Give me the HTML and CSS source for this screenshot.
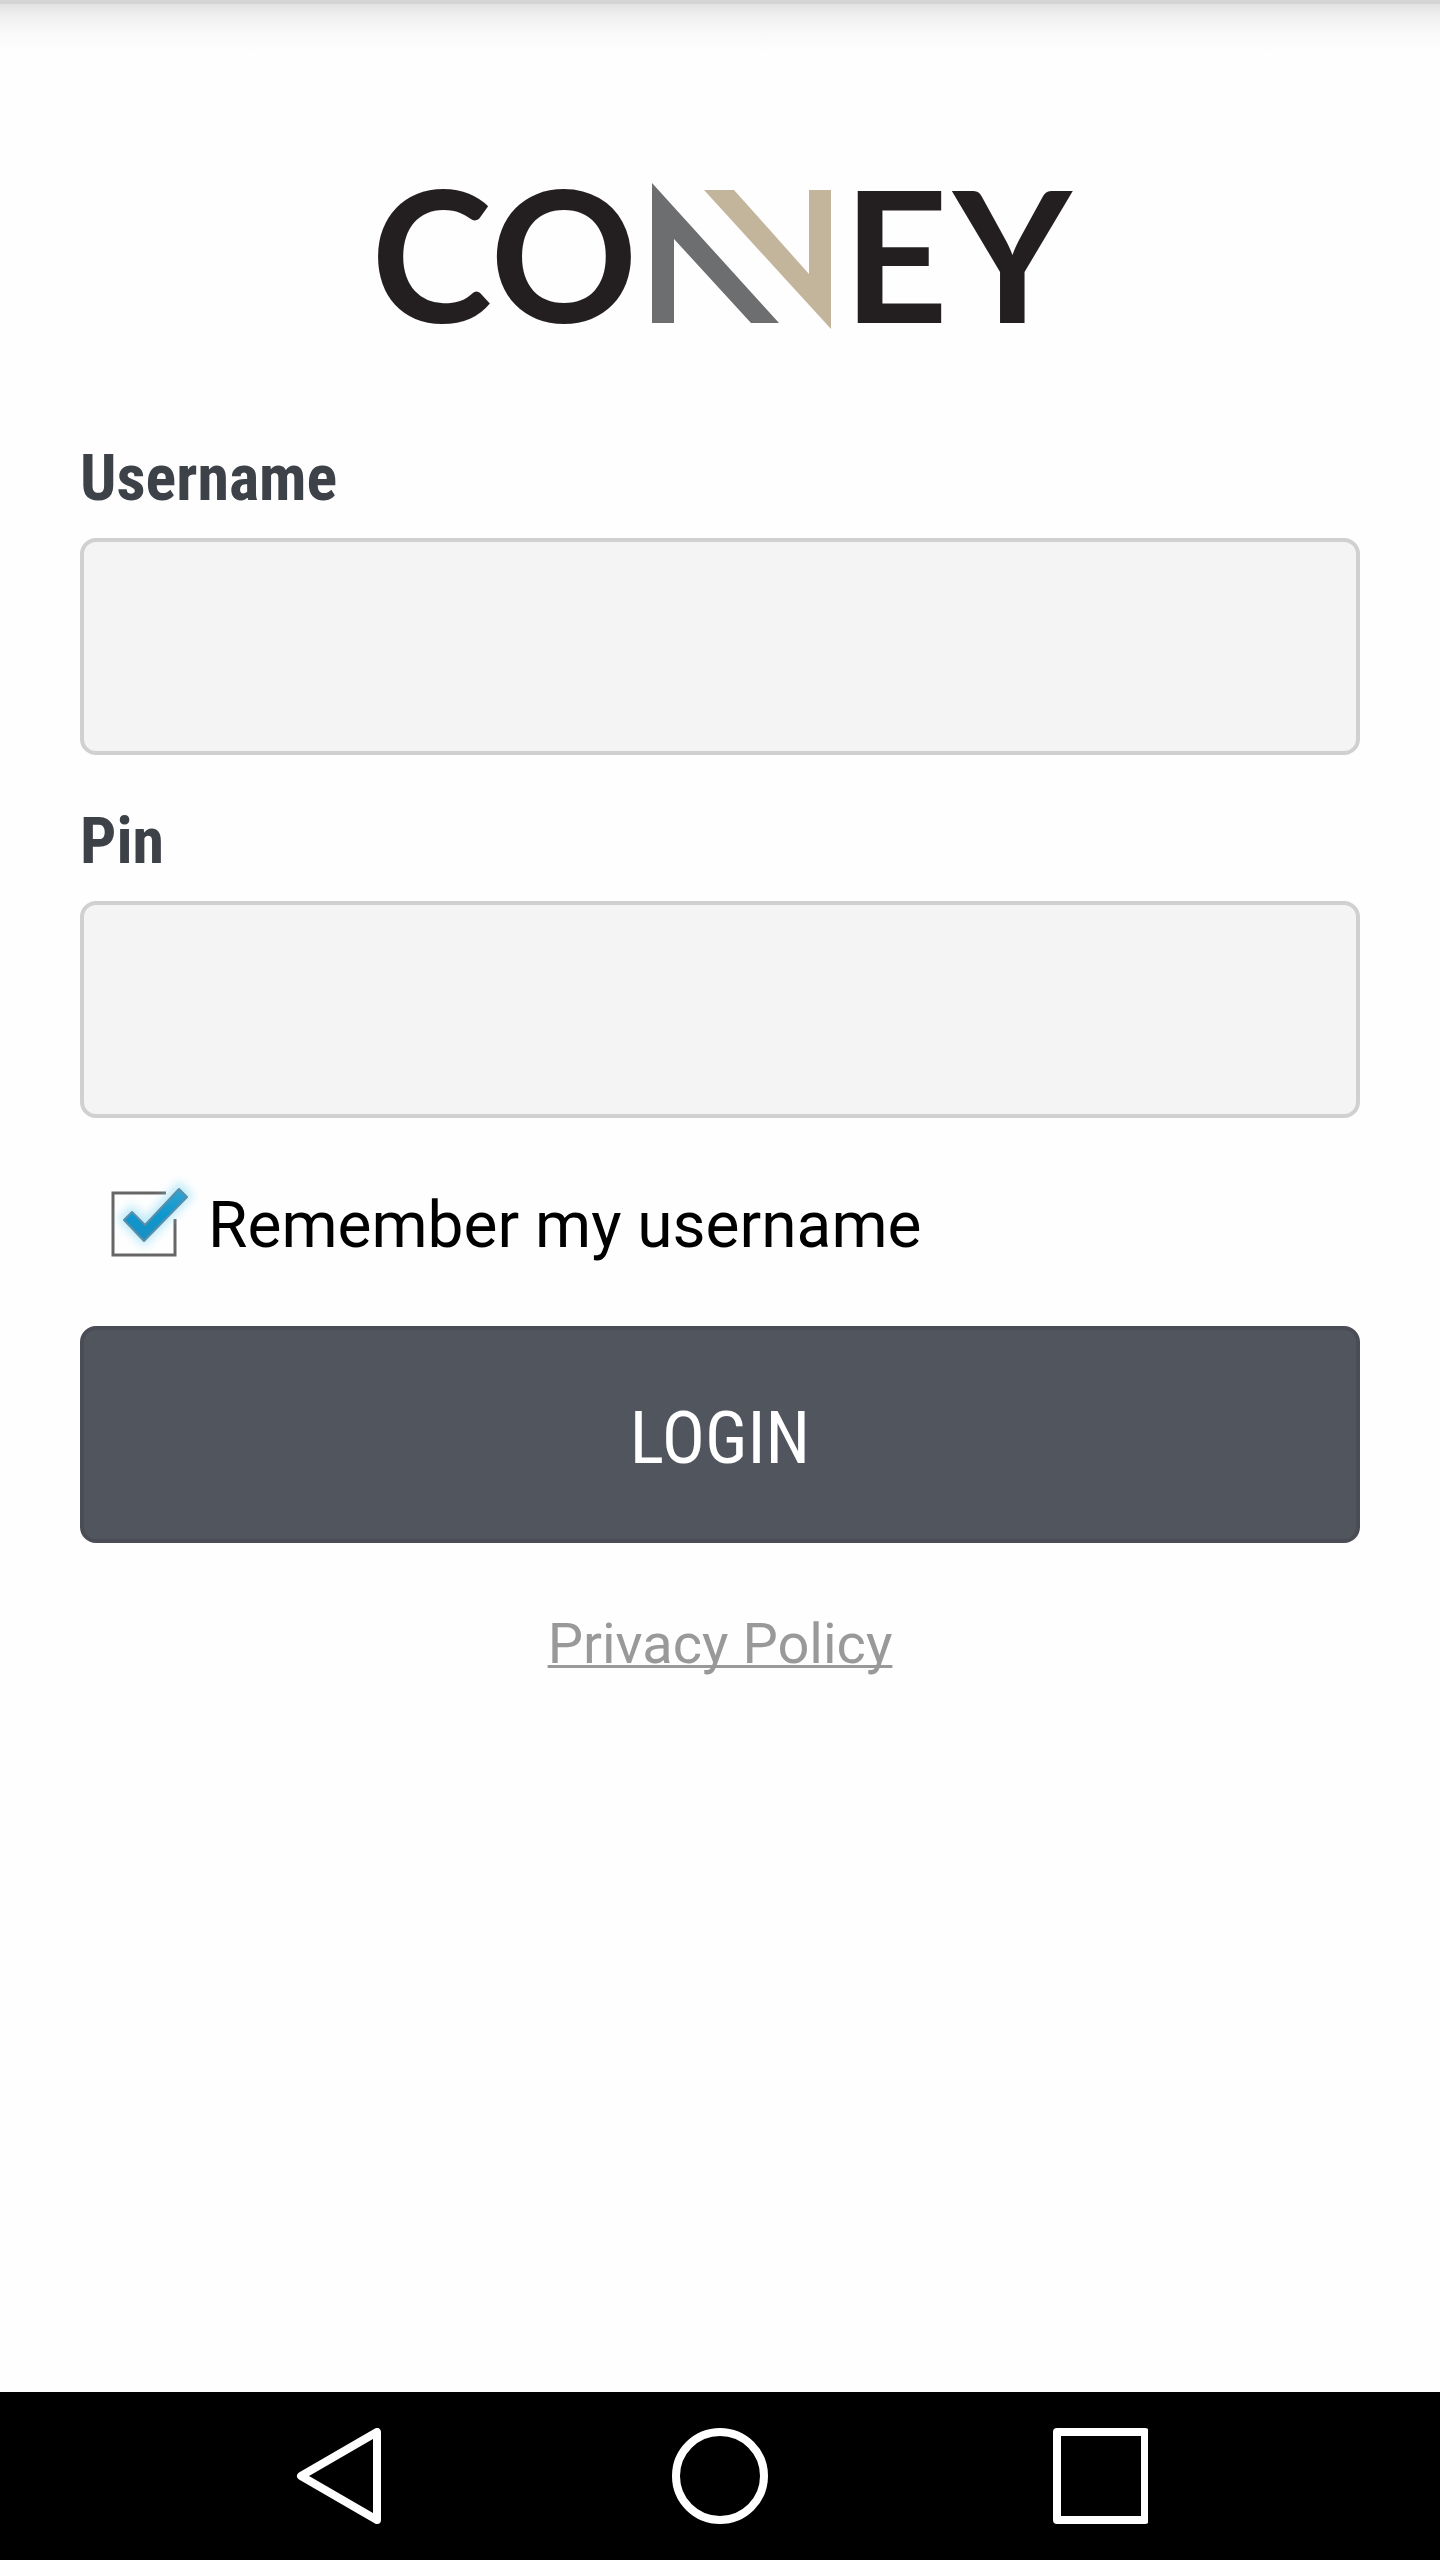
FILE: index.html
```html
<!DOCTYPE html>
<html lang="en">
<head>
    <meta charset="UTF-8">
    <meta name="viewport" content="width=device-width, initial-scale=1.0">
    <title>Convey Login</title>
    <link rel="stylesheet" href="styles.css">
</head>
<body>

    <header class="top-shadow"></header>

    <main class="container">
        <svg class="logo" viewBox="368 180 704 152" role="img" aria-label="Convey">
            <g class="logo-text">
                <text x="371" y="323">C</text>
                <text x="490" y="323">O</text>
                <text x="843" y="323">E</text>
                <text x="953" y="323">Y</text>
            </g>
            <polygon fill="#6d6e70" points="652,183 779,323 751,323 674,239 674,323 652,323"/>
            <polygon fill="#c2b59b" points="704,190 734,190 809,274 809,190 831,190 831,329"/>
        </svg>

        <form id="loginForm">
            <div class="form-group">
                <label for="username">Username</label>
                <input type="text" id="username" name="username">
            </div>

            <div class="form-group">
                <label for="pin">Pin</label>
                <input type="password" id="pin" name="pin">
            </div>

            <div class="remember">
                <span class="checkbox">
                    <input type="checkbox" id="remember" name="remember" checked>
                    <svg viewBox="0 0 84 76" aria-hidden="true">
                        <defs>
                            <linearGradient id="tick" x1="0" y1="0" x2="0" y2="1">
                                <stop offset="0" stop-color="#35a3d0"/>
                                <stop offset="0.5" stop-color="#0d97cf"/>
                                <stop offset="1" stop-color="#1b8fc0"/>
                            </linearGradient>
                            <filter id="glow" x="-50%" y="-50%" width="200%" height="200%">
                                <feGaussianBlur stdDeviation="5"/>
                            </filter>
                        </defs>
                        <path class="tick-box" d="M54 5H1V67H63V31"/>
                        <g class="tick-mark">
                            <path d="M11 31L20 22L33 36L67 -1L76 8L32 53Z" fill="#8fdcf5" stroke="#8fdcf5" stroke-width="8" opacity="0.6" filter="url(#glow)"/>
                            <path d="M12 32L20 24L33 37L67 1L75 9L32 53Z" fill="url(#tick)" stroke="#5b8ea8" stroke-width="2" stroke-linejoin="round"/>
                        </g>
                    </svg>
                </span>
                <label for="remember">Remember my username</label>
            </div>

            <button type="submit">LOGIN</button>
        </form>

        <a class="privacy" href="#privacy">Privacy Policy</a>
    </main>

    <nav class="navbar">
        <button type="button" aria-label="Back">
            <svg viewBox="0 0 96 96"><path d="M85 4V92L9 48Z"/></svg>
        </button>
        <button type="button" aria-label="Home">
            <svg viewBox="0 0 96 96"><circle cx="48" cy="48" r="44"/></svg>
        </button>
        <button type="button" aria-label="Recent apps">
            <svg viewBox="0 0 96 96"><rect x="5" y="4" width="88" height="88"/></svg>
        </button>
    </nav>

</body>
</html>
```
FILE: styles.css
```css
* {
    box-sizing: border-box;
}
body {
    font-family: Roboto, Arial, sans-serif;
    background-color: #fefefe;
    margin: 0;
    min-height: 100vh;
    display: flex;
    flex-direction: column;
}
.top-shadow {
    height: 52px;
    border-top: 4px solid #d4d4d4;
    background: linear-gradient(#e2e2e2, #f0f0f0 25%, #f9f9f9 60%, #fefefe);
}
.container {
    flex: 1;
    display: flex;
    flex-direction: column;
    align-items: center;
    padding: 128px 80px 80px;
}
.logo {
    width: 704px;
    max-width: 100%;
    margin-bottom: 109px;
    overflow: visible;
}
.logo-text {
    font-family: Lato, sans-serif;
    font-size: 183px;
    font-weight: bold;
    fill: #231f20;
}
form {
    width: 100%;
}
.form-group {
    margin-bottom: 49px;
}
.form-group label {
    display: block;
    margin-bottom: 21px;
    font-family: "Roboto Condensed", Roboto, sans-serif;
    font-size: 64px;
    line-height: 76px;
    font-weight: bold;
    color: #3d4148;
}
input[type="text"],
input[type="password"] {
    display: block;
    width: 100%;
    height: 217px;
    padding: 0 32px;
    font-family: inherit;
    font-size: 64px;
    background-color: #f4f4f4;
    border: 4px solid #d0d0d0;
    border-radius: 16px;
}
.remember {
    display: flex;
    align-items: center;
    margin: 70px 0 62px 32px;
    gap: 12px;
    font-size: 64px;
    line-height: 76px;
    color: #000;
}
.checkbox {
    display: grid;
    width: 84px;
    height: 76px;
}
.checkbox input,
.checkbox svg {
    grid-area: 1 / 1;
    width: 84px;
    height: 76px;
    margin: 0;
}
.checkbox input {
    appearance: none;
}
.checkbox svg {
    overflow: visible;
    pointer-events: none;
}
.tick-box {
    fill: none;
    stroke: #666;
    stroke-width: 3;
}
.checkbox input:not(:checked) + svg .tick-mark {
    display: none;
}
form button {
    display: block;
    width: 100%;
    height: 217px;
    padding: 8px 0 0;
    font-family: "Roboto Condensed", Roboto, sans-serif;
    font-size: 72px;
    color: #fff;
    background-color: #51555d;
    border: 4px solid #4b4d56;
    border-radius: 16px;
    cursor: pointer;
}
.privacy {
    margin-top: 68px;
    font-size: 56px;
    line-height: 66px;
    color: #999;
    text-decoration-thickness: 3px;
    text-decoration-skip-ink: none;
}
.navbar {
    display: flex;
    justify-content: center;
    gap: 284px;
    padding: 36px 0;
    background-color: #000;
}
.navbar button {
    padding: 0;
    border: none;
    background: none;
}
.navbar svg {
    display: block;
    width: 96px;
    height: 96px;
    fill: none;
    stroke: #fff;
    stroke-width: 8;
    stroke-linejoin: round;
}
```
